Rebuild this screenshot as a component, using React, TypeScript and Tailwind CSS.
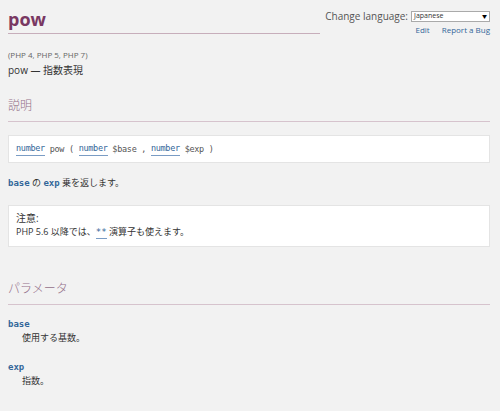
import React from "react";

const sans = "font-['Open_Sans','Noto_Sans_CJK_JP',sans-serif]";
const mono = "font-['DejaVu_Sans_Mono','Noto_Sans_CJK_JP',monospace]";

function TypeLink({ children }: { children: React.ReactNode }) {
  return (
    <span className="text-[#369] border-b border-[#7a9cc4]">{children}</span>
  );
}

function SectionTitle({ children }: { children: React.ReactNode }) {
  return (
    <h2 className="text-[12px] leading-[16px] text-[#94708a] pb-[7px] border-b border-[#d6c3cd] font-light">
      {children}
    </h2>
  );
}

export default function App() {
  return (
    <div className={`${sans} bg-[#f2f2f2] w-[500px] h-[411px] overflow-hidden text-[#333]`}>
      <div className="flex pl-2 pr-[10px] pt-[7px]">
        <div className="w-[312px]">
          <h1 className="text-[18px] leading-[24px] font-bold text-[#793862] pb-[2px] border-b border-[#c7aebb]">
            pow
          </h1>
        </div>
        <div className="flex-1 flex flex-col items-end pt-[2px]">
          <div className="flex items-center gap-[3px] whitespace-nowrap">
            <span className="text-[10px] leading-[14px] text-[#555]">Change language:</span>
            <div className="w-[79px] h-[11px] bg-white border border-[#aaa] flex items-center justify-between px-[2px]">
              <span className="text-[7px] leading-[8px] text-[#333]">Japanese</span>
              <span className="text-[5px] leading-[6px] text-black">▼</span>
            </div>
          </div>
          <div className="flex gap-[12px] mt-[2px] text-[8px] leading-[10px] text-[#369] whitespace-nowrap">
            <span>Edit</span>
            <span>Report a Bug</span>
          </div>
        </div>
      </div>

      <div className="px-2">
        <p className="mt-[15px] text-[8px] leading-[10px] text-[#666]">(PHP 4, PHP 5, PHP 7)</p>
        <p className="mt-[3px] text-[10px] leading-[14px]">pow — 指数表現</p>

        <div className="mt-[21px] pr-[2px]">
          <SectionTitle>説明</SectionTitle>
          <div className={`${mono} mt-[13px] bg-white border border-[#e4e4e4] h-[28px] flex items-center pl-[7px] text-[8.5px] tracking-[-0.3px] text-[#555] whitespace-pre`}>
            <TypeLink>number</TypeLink> pow ( <TypeLink>number</TypeLink> $base , <TypeLink>number</TypeLink> $exp )
          </div>
          <p className="mt-[13px] text-[9px] leading-[14px]">
            <span className={`${mono} font-bold text-[#369]`}>base</span> の{" "}
            <span className={`${mono} font-bold text-[#369]`}>exp</span> 乗を返します。
          </p>
          <div className="mt-[15px] bg-white border border-[#e4e4e4] h-[42px] pl-[7px] pt-[5px]">
            <p className="text-[10px] leading-[14px]">注意:</p>
            <p className="text-[9px] leading-[14px]">
              PHP 5.6 以降では、<TypeLink><span className={mono}>**</span></TypeLink> 演算子も使えます。
            </p>
          </div>

          <div className="mt-[34px]">
            <SectionTitle>パラメータ</SectionTitle>
          </div>
          <dl className="mt-[12px]">
            <dt className={`${mono} font-bold text-[9px] leading-[14px] text-[#369]`}>base</dt>
            <dd className="pl-[14px] text-[9px] leading-[14px]">使用する基数。</dd>
            <dt className={`${mono} font-bold text-[9px] leading-[14px] text-[#369] mt-[15px]`}>exp</dt>
            <dd className="pl-[14px] text-[9px] leading-[14px]">指数。</dd>
          </dl>
        </div>
      </div>
    </div>
  );
}
